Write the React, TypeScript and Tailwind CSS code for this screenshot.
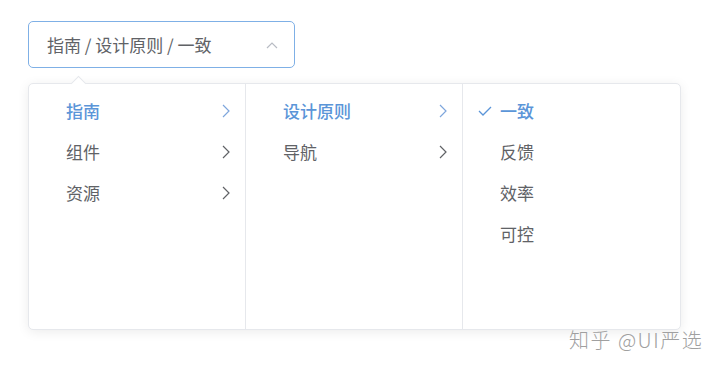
import React from 'react'

const font = { fontFamily: '"Noto Sans CJK SC", "Noto Sans", sans-serif' }

type Item = { label: string; active?: boolean; hasChildren?: boolean; checked?: boolean }

const columns: Item[][] = [
    [
        { label: '指南', active: true, hasChildren: true },
        { label: '组件', hasChildren: true },
        { label: '资源', hasChildren: true },
    ],
    [
        { label: '设计原则', active: true, hasChildren: true },
        { label: '导航', hasChildren: true },
    ],
    [
        { label: '一致', active: true, checked: true },
        { label: '反馈' },
        { label: '效率' },
        { label: '可控' },
    ],
]

const Chevron = ({ active }: { active?: boolean }) => (
    <svg width="8" height="14" viewBox="0 0 8 14" fill="none">
        <path d="M1 1l6 6-6 6" stroke={active ? '#7ea6dc' : '#606266'} strokeWidth="1.2" />
    </svg>
)

const Check = () => (
    <svg width="14" height="10" viewBox="0 0 14 10" fill="none">
        <path d="M1 5l4 4 8-8" stroke="#5b95d8" strokeWidth="1.3" />
    </svg>
)

export default function App() {
    return (
        <div className="w-[720px] h-[370px] bg-white relative overflow-hidden" style={font}>
            <div className="pt-[21px] pl-[28px]">
                {/* Input */}
                <div className="w-[267px] h-[47px] border border-[#7fb0e6] rounded-[5px] flex items-center justify-between pl-[18px] pr-[16px]">
                    <span className="text-[17px] text-[#606266]">指南 / 设计原则 / 一致</span>
                    <svg width="12" height="8" viewBox="0 0 12 8" fill="none">
                        <path d="M1 7l5-5 5 5" stroke="#b8bcc4" strokeWidth="1.2" />
                    </svg>
                </div>

                {/* Dropdown */}
                <div className="relative mt-[15px] w-[653px] h-[247px] bg-white border border-[#e6e8ec] rounded-[5px] shadow-[0_2px_12px_rgba(0,0,0,0.08)] flex">
                    <div className="absolute -top-[6px] left-[44px] w-[11px] h-[11px] bg-white border-l border-t border-[#e6e8ec] rotate-45" />
                    {columns.map((col, ci) => (
                        <div
                            key={ci}
                            className={`w-[217px] pt-[6px] ${ci < 2 ? 'border-r border-[#e6e8ec]' : ''}`}
                        >
                            {col.map((it) => (
                                <div
                                    key={it.label}
                                    className={`h-[41px] flex items-center text-[17px] ${ci === 2 ? 'pl-[15px]' : 'pl-[37px]'} pr-[15px] ${it.active ? 'text-[#5b95d8] font-medium' : 'text-[#606266]'}`}
                                >
                                    {ci === 2 && (
                                        <span className="w-[22px] flex items-center">{it.checked && <Check />}</span>
                                    )}
                                    <span className="flex-1">{it.label}</span>
                                    {it.hasChildren && <Chevron active={it.active} />}
                                </div>
                            ))}
                        </div>
                    ))}
                </div>
            </div>

            {/* Watermark */}
            <div className="absolute left-[569px] top-[325px] text-[20px] font-light text-[#a0a0a0] tracking-[1.5px]">知乎 @UI严选</div>
        </div>
    )
}
